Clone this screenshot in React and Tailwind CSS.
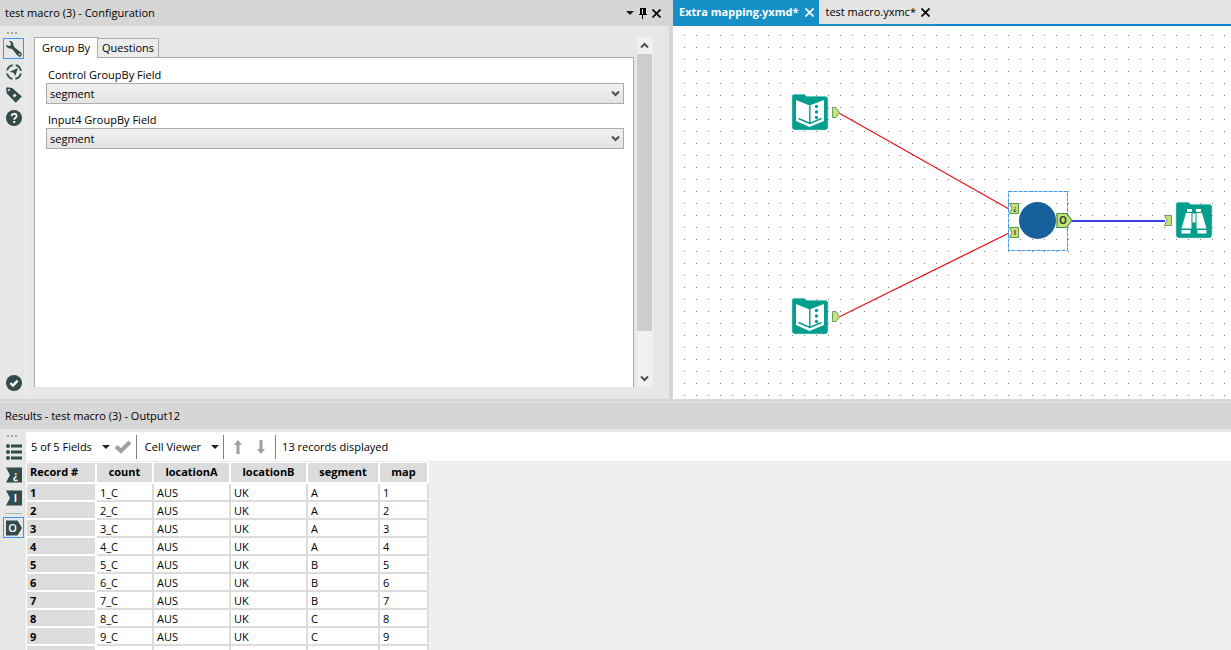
import React, { useState } from "react";

const groupByFields = [
  { id: "control", label: "Control GroupBy Field", value: "segment" },
  { id: "input4", label: "Input4 GroupBy Field", value: "segment" },
];

const columns = [
  { name: "count", width: "w-[57px]" },
  { name: "locationA", width: "w-[77px]" },
  { name: "locationB", width: "w-[77px]" },
  { name: "segment", width: "w-[72px]" },
  { name: "map", width: "w-[49px]" },
];

const records = ["A", "A", "A", "A", "B", "B", "B", "C", "C"].map((segment, i) => ({
  count: `${i + 1}_C`,
  locationA: "AUS",
  locationB: "UK",
  segment,
  map: i + 1,
}));

const Grip = () => (
  <svg width="12" height="2" fill="#a8a8a8" shapeRendering="crispEdges" className="ml-1">
    <path d="M0 0h2v2H0zM4 0h2v2H4zM8 0h2v2H8z" />
  </svg>
);

const CloseIcon = () => (
  <svg width="9" height="9" viewBox="0 0 9 9" stroke="currentColor" strokeWidth="1.7">
    <path d="M0.5 0.5l8 8M8.5 0.5l-8 8" />
  </svg>
);

const Caret = () => (
  <svg width="8" height="4" viewBox="0 0 8 4" fill="#1e1e1e">
    <path d="M0 0h8L4 4z" />
  </svg>
);

const PinIcon = () => (
  <svg width="8" height="11" viewBox="0 0 8 11" fill="#000" shapeRendering="crispEdges">
    <path d="M1 0h6v6h1v1H0V6h1zM3 7h1v4H3z" />
    <path d="M3 1h1v5H3z" fill="#d6d6d6" />
  </svg>
);

const Chevron = ({ up }) => (
  <svg width="9" height="7" viewBox="0 0 9 7" fill="none" stroke="#505050" strokeWidth="2">
    <path d={up ? "M1 5.5L4.5 2L8 5.5" : "M1 1.5L4.5 5L8 1.5"} />
  </svg>
);

const WrenchIcon = () => (
  <svg width="16" height="16" viewBox="0 0 16 16" fill="#324b4b">
    <path d="M3.2 0.2C5.6 -0.3 7.6 1.5 7.4 4.2L8.4 6.2L15 11.6C16.4 13 15.9 15.3 14.2 15.7C13 16 12.1 15.4 11.4 14.6L6.4 8.2L4.4 7.4C2.2 7.7 0.2 6.2 0 3.4L2.5 5.1L4.6 4.6L5.1 2.4z" />
    <circle cx="13.5" cy="13.4" r="0.9" fill="#e7e7e7" />
  </svg>
);

const CompassIcon = () => (
  <svg width="16" height="16" viewBox="0 0 16 16" fill="#324b4b">
    <circle cx="8" cy="8" r="7" fill="none" stroke="#324b4b" strokeWidth="1.8" strokeDasharray="8 3" strokeDashoffset="-1.5" />
    <path d="M12 4L9.2 12L7.6 8.8L3.8 7.8z" />
  </svg>
);

const TagIcon = () => (
  <svg width="16" height="16" viewBox="0 0 16 16" fill="#324b4b">
    <path d="M0 1.2L1 0.2L6.2 1L15.8 9.6L9.8 15.8L0.8 6.6z" />
    <circle cx="2.9" cy="3" r="1.1" fill="#e7e7e7" />
    <rect x="-1.3" y="-1.5" width="2.6" height="3" transform="translate(8.6 8.6) rotate(45)" fill="#e7e7e7" />
  </svg>
);

const HelpIcon = () => (
  <svg width="16" height="16" viewBox="0 0 16 16">
    <circle cx="8" cy="8" r="8" fill="#324b4b" />
    <path d="M5.6 6.2C5.6 3 10.6 3 10.6 6C10.6 7.8 8.2 7.8 8.2 9.8" fill="none" stroke="#fff" strokeWidth="1.8" />
    <rect x="7.2" y="11" width="2" height="2" fill="#fff" />
  </svg>
);

const CheckCircleIcon = () => (
  <svg width="16" height="16" viewBox="0 0 16 16">
    <circle cx="8" cy="8" r="8" fill="#324b4b" />
    <path d="M4.4 8.2L7 10.6L11.6 5.6" fill="none" stroke="#fff" strokeWidth="2.4" />
  </svg>
);

const ListIcon = () => (
  <svg width="16" height="16" viewBox="0 0 16 16" fill="#324b4b">
    <circle cx="2" cy="2" r="2" />
    <circle cx="2" cy="8" r="2" />
    <circle cx="2" cy="14" r="2" />
    <path d="M5 0.5h11v3H5zM5 6.5h11v3H5zM5 12.5h11v3H5z" />
  </svg>
);

const AnchorIcon = ({ letter }) => (
  <svg width="16" height="16" viewBox="0 0 16 16">
    <path d="M0 0.5h16v15H0L4 8z" fill="#324b4b" />
    <text x="9.5" y="12" textAnchor="middle" fontSize="10" fontWeight="700" fill="#fff">
      {letter}
    </text>
  </svg>
);

const OutputIcon = () => (
  <svg width="16" height="16" viewBox="0 0 16 16">
    <path d="M0 0.5h11.5L16 8L11.5 15.5H0z" fill="#324b4b" />
    <text x="6.5" y="12" textAnchor="middle" fontSize="11" fontWeight="600" fill="#fff">
      O
    </text>
  </svg>
);

const PanelTitle = ({ children, actions }) => (
  <header className="flex h-[26px] shrink-0 items-center justify-between bg-[#d6d6d6] pr-2 pl-[5px]">
    <h2>{children}</h2>
    {actions}
  </header>
);

const SideButton = ({ label, active, children }) => (
  <button
    aria-label={label}
    className={
      active
        ? "flex h-[21px] w-[21px] shrink-0 items-center justify-center border border-[#3399ff]"
        : "flex h-[21px] w-[21px] shrink-0 items-center justify-center"
    }
  >
    {children}
  </button>
);

const Configuration = () => {
  const [fields, setFields] = useState(groupByFields);

  const changeField = (id, value) => {
    setFields(fields.map((f) => (f.id === id ? { ...f, value } : f)));
  };

  return (
    <section className="flex min-h-0 flex-col border-r-4 border-[#d6d6d6] bg-[#e7e7e7]">
      <PanelTitle
        actions={
          <div className="flex items-center gap-[5px]">
            <button aria-label="Window position"><Caret /></button>
            <button aria-label="Auto hide"><PinIcon /></button>
            <button aria-label="Close panel"><CloseIcon /></button>
          </div>
        }
      >
        test macro (3) - Configuration
      </PanelTitle>

      <div className="flex min-h-0 flex-1">
        <nav className="mt-[2px] mb-1 flex w-[26px] shrink-0 flex-col items-start gap-[2px] border-r border-[#f2f2f2] pt-1 pb-[2px] pl-[3px]">
          <Grip />
          <div className="mt-[2px] flex flex-1 flex-col gap-[2px]">
            <SideButton label="Configuration" active><WrenchIcon /></SideButton>
            <SideButton label="Navigation"><CompassIcon /></SideButton>
            <SideButton label="Annotation"><TagIcon /></SideButton>
            <SideButton label="Help"><HelpIcon /></SideButton>
          </div>
          <SideButton label="Apply"><CheckCircleIcon /></SideButton>
        </nav>

        <div className="flex min-w-0 flex-1 pt-[11px] pr-4 pb-3 pl-2">
          <div className="flex min-w-0 flex-1 flex-col">
            <div role="tablist" className="flex items-end">
              <button role="tab" aria-selected="true" className="relative z-10 -mb-px h-[21px] border border-b-0 border-[#acacac] bg-white px-[7px]">
                Group By
              </button>
              <button role="tab" aria-selected="false" className="-ml-px h-[19px] border border-b-0 border-[#acacac] bg-[#ececec] px-1">
                Questions
              </button>
            </div>
            <div className="flex-1 border border-b-0 border-[#acacac] bg-white pt-[9px] pr-[9px] pl-[11px]">
              {fields.map((field) => (
                <div key={field.id} className="mb-2">
                  <label htmlFor={field.id} className="block pl-[2px] leading-4">{field.label}</label>
                  <div className="relative">
                    <select
                      id={field.id}
                      value={field.value}
                      onChange={(e) => changeField(field.id, e.target.value)}
                      className="block h-[21px] w-full appearance-none border border-[#acacac] bg-linear-to-b from-[#f0f0f0] to-[#e4e4e4] px-[3px]"
                    >
                      {columns.map((col) => (
                        <option key={col.name}>{col.name}</option>
                      ))}
                    </select>
                    <span className="pointer-events-none absolute top-[7px] right-1">
                      <Chevron />
                    </span>
                  </div>
                </div>
              ))}
            </div>
          </div>

          {/* Scrollbar */}
          <div className="ml-[3px] flex w-4 flex-col items-center bg-[#f0f0f0]">
            <button aria-label="Scroll up" className="flex h-[17px] w-full shrink-0 items-center justify-center pr-[2px]"><Chevron up /></button>
            <div className="flex w-full flex-1 flex-col pr-px">
              <div className="flex-[277] bg-[#cdcdcd]" />
              <div className="flex-[39]" />
            </div>
            <button aria-label="Scroll down" className="flex h-[17px] w-full shrink-0 items-center justify-center pr-[2px]"><Chevron /></button>
          </div>
        </div>
      </div>
    </section>
  );
};

const ToolTile = () => (
  <path
    d="M2.5 0.3H12.5L14.5 2.3H33Q36 2.3 36 5.3V33Q36 36 33 36H3Q0 36 0 33V2.8Q0 0.3 2.5 0.3z"
    fill="#049e8e"
    stroke="#a9ddd5"
    strokeWidth="0.5"
  />
);

const TextInputTool = ({ x, y }) => (
  <g transform={`translate(${x} ${y})`}>
    <ToolTile />
    <path d="M4 6L17.5 11.5L32 6V27L17.5 33L4 27z" fill="#fff" />
    <path d="M17.8 11.5V29.5M6.5 24.5L17.8 29.5L29.5 24.5" fill="none" stroke="#049e8e" strokeWidth="1.4" />
    <g fill="#049e8e">
      <circle cx="24.5" cy="12.5" r="1.7" />
      <circle cx="24.5" cy="18" r="1.7" />
      <circle cx="24.5" cy="23.5" r="1.7" />
    </g>
    <path d="M40.5 13.5h3.5l3.5 5l-3.5 5h-3.5z" fill="#c6e07a" stroke="#6d9e63" />
  </g>
);

const BrowseTool = ({ x, y }) => (
  <g transform={`translate(${x} ${y})`}>
    <path d="M-11.5 13.5h7v10h-7l2.5-5z" fill="#c6e07a" stroke="#6d9e63" />
    <ToolTile />
    <g fill="#fff">
      <path d="M11 7h5v3h-5zM20 7h5v3h-5z" />
      <path d="M10 11h5.5v15.5H5.5z" />
      <path d="M26 11h-5.5v15.5h10z" />
      <path d="M16.3 11.5h3.4v9h-3.4z" />
      <path d="M5.5 28h9v3.5h-9zM21.5 28h9v3.5h-9z" />
      <path d="M14 11h2v10h-2zM20 11h2v10h-2z" />
    </g>
    <path d="M15.8 11v10M20.2 11v10" stroke="#049e8e" strokeWidth="0.8" />
  </g>
);

const MacroTool = () => (
  <g>
    <rect x="335.5" y="165.5" width="59" height="59" fill="none" stroke="#3d9bea" strokeDasharray="4 1" />
    <circle cx="364.5" cy="194.5" r="18.5" fill="#17609b" />
    <g fill="#c6e07a" stroke="#5f9a4e">
      <path d="M336.5 177.5h9v10h-9l2.5-5z" />
      <path d="M336.5 201.5h9v10h-9l2.5-5z" />
    </g>
    <path d="M384 187.5h9.5l5.5 7l-5.5 7H384z" fill="#c6e07a" stroke="#3f8f3f" strokeWidth="1.2" />
    <g fill="#33472b" fontWeight="700" textAnchor="middle">
      <text x="342" y="185" fontSize="7">¿</text>
      <text x="342" y="209" fontSize="7">I</text>
      <text x="390" y="198" fontSize="10">O</text>
    </g>
  </g>
);

const Workflow = () => (
  <section className="flex min-h-0 min-w-0 flex-col bg-white">
    <div className="flex h-[26px] shrink-0 bg-[#e4e4e4]">
      <div className="flex items-center gap-[7px] bg-[#1790c8] pr-[5px] pb-[2px] pl-[6px] text-white">
        <button className="font-bold">Extra mapping.yxmd*</button>
        <button aria-label="Close Extra mapping"><CloseIcon /></button>
      </div>
      <div className="flex items-center gap-[5px] border-b-2 border-[#1790c8] pr-[5px] pl-[6px]">
        <button>test macro.yxmc*</button>
        <button aria-label="Close test macro"><CloseIcon /></button>
      </div>
      <div className="flex-1 border-b-2 border-[#0d84d0]" />
    </div>
    <svg className="min-h-0 w-full flex-1">
      <defs>
        <pattern id="dots" width="12" height="12" patternUnits="userSpaceOnUse">
          <rect x="11" y="9" width="1" height="1" fill="#7f7f7f" />
        </pattern>
      </defs>
      <rect width="100%" height="100%" fill="url(#dots)" />
      <g fill="none" strokeWidth="1.3">
        <path d="M166 87L336 183M166 291L336 207" stroke="#e2171b" />
        <path d="M399 195H492" stroke="#3a3ae6" strokeWidth="2" />
      </g>
      <TextInputTool x={119} y={68} />
      <TextInputTool x={119} y={272} />
      <MacroTool />
      <BrowseTool x={503} y={176} />
    </svg>
  </section>
);

const Results = () => (
  <section className="flex min-h-0 flex-col border-t border-[#e2e2e2] bg-[#e7e7e7]">
    <PanelTitle>Results - test macro (3) - Output12</PanelTitle>
    <div className="flex min-h-0 flex-1">
      <nav className="flex w-[26px] shrink-0 flex-col items-start gap-[2px] pt-[6px] pl-[3px]">
        <Grip />
        <div className="mt-[2px] flex flex-col gap-[2px]">
          <SideButton label="All"><ListIcon /></SideButton>
          <SideButton label="Control input"><AnchorIcon letter="¿" /></SideButton>
          <SideButton label="Input"><AnchorIcon letter="I" /></SideButton>
        </div>
        <hr className="mt-[3px] mb-px ml-[2px] w-[17px] border-[#b4b4b4]" />
        <SideButton label="Output" active><OutputIcon /></SideButton>
      </nav>

      <div className="mt-[3px] flex min-w-0 flex-1 flex-col overflow-hidden bg-[#efefef]">
        <div className="flex h-[30px] shrink-0 items-center border-b border-[#ececec] bg-white pl-[5px]">
          <button className="flex items-center gap-[10px]">5 of 5 Fields <Caret /></button>
          <button aria-label="Apply" className="ml-1">
            <svg width="18" height="14" viewBox="0 0 18 14" fill="none" stroke="#a0a0a0" strokeWidth="4">
              <path d="M2 6.5L7 11L16 2" />
            </svg>
          </button>
          <div className="mr-2 ml-1 h-6 w-px bg-[#828282]" />
          <button className="flex items-center gap-[10px]">Cell Viewer <Caret /></button>
          <div className="mr-[10px] ml-1 h-6 w-px bg-[#828282]" />
          <div className="flex gap-[15px]">
            <button aria-label="Previous">
              <svg width="8" height="14" viewBox="0 0 8 14" fill="#a0a0a0">
                <path d="M4 0L8 5H5.5V14H2.5V5H0z" />
              </svg>
            </button>
            <button aria-label="Next">
              <svg width="8" height="14" viewBox="0 0 8 14" fill="#a0a0a0">
                <path d="M4 14L8 9H5.5V0H2.5V9H0z" />
              </svg>
            </button>
          </div>
          <div className="mr-[6px] ml-[10px] h-6 w-px bg-[#828282]" />
          <span>13 records displayed</span>
        </div>

        <div className="min-h-0 flex-1 overflow-hidden">
          <table className="w-[403px] table-fixed border-separate border-spacing-0 border-t border-l border-white bg-white leading-[15px]">
            <thead>
              <tr>
                <th className="h-[21px] w-[70px] border-r-2 border-b-2 border-white bg-[#dcdcdc] pb-[2px] pl-[3px] text-left">Record #</th>
                {columns.map((col) => (
                  <th key={col.name} className={`${col.width} border-r-2 border-b-2 border-white bg-[#dcdcdc] pb-[2px]`}>
                    {col.name}
                  </th>
                ))}
              </tr>
            </thead>
            <tbody>
              {records.map((record) => (
                <tr key={record.map}>
                  <th className="h-[18px] border-r-2 border-b-2 border-white bg-[#dcdcdc] pl-[3px] text-left">{record.map}</th>
                  {columns.map((col) => (
                    <td key={col.name} className="border-r-2 border-b-2 border-[#dcdcdc] bg-white pt-px pl-[3px]">
                      {record[col.name]}
                    </td>
                  ))}
                </tr>
              ))}
              {/* next row, only its top edge is in view */}
              <tr>
                <th className="h-[18px] border-r-2 border-white bg-[#dcdcdc]" />
                {columns.map((col) => (
                  <td key={col.name} className="border-r-2 border-[#dcdcdc] bg-white" />
                ))}
              </tr>
            </tbody>
          </table>
        </div>
      </div>
    </div>
  </section>
);

const App = () => {
  return (
    <div className="grid h-screen grid-rows-[399fr_251fr] overflow-hidden bg-[#d6d6d6] font-['Open_Sans','Noto_Sans',sans-serif] text-[11px] leading-4 text-black">
      <div className="grid min-h-0 grid-cols-[673fr_558fr]">
        <Configuration />
        <Workflow />
      </div>
      <div className="grid min-h-0 pt-[3px]">
        <Results />
      </div>
    </div>
  );
};

export default App;
